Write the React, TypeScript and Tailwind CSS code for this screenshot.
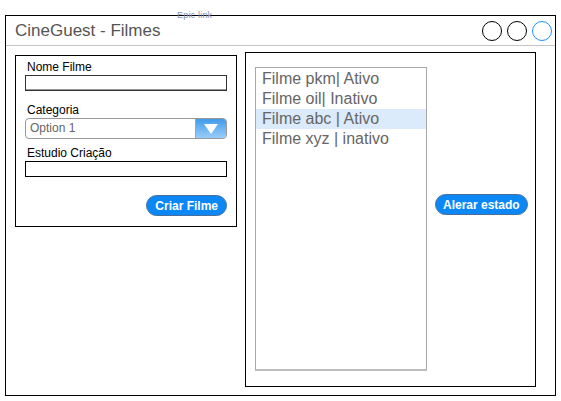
export default function App() {
  const films = [
    { id: "pkm", label: "Filme pkm| Ativo" },
    { id: "oil", label: "Filme oil| Inativo" },
    { id: "abc", label: "Filme abc | Ativo" },
    { id: "xyz", label: "Filme xyz | inativo" },
  ];
  const selected = "abc";

  return (
    <div className="relative w-[561px] h-[401px] bg-white font-['Liberation_Sans',Arial,sans-serif]">
      <span className="absolute z-10 left-[177px] top-[10px] text-[9px] leading-[10px] text-[#8292b4] tracking-[0.2px]">
        Epic link
      </span>
      <div className="ml-[5px] pt-[15px]">
        <div className="w-[551px] h-[381px] border border-black flex flex-col">
          {/* title bar */}
          <div className="h-[30px] shrink-0 flex items-center justify-between border-b border-[#c4c4c4] pl-[9px] pr-[3px]">
            <span className="text-[17px] text-[#555] leading-none">CineGuest - Filmes</span>
            <div className="flex gap-[5px]">
              <span className="w-[20px] h-[20px] rounded-full border border-black" />
              <span className="w-[20px] h-[20px] rounded-full border border-black" />
              <span className="w-[20px] h-[20px] rounded-full border border-[#1e90ff]" />
            </div>
          </div>

          <div className="flex items-start pl-[9px] pt-[6px] gap-[8px]">
            {/* form panel */}
            <div className="mt-[3px] w-[222px] h-[172px] border border-black px-[9px] pt-[4px] flex flex-col">
              <label className="pl-[2px] text-[12px] leading-[14px] text-black">Nome Filme</label>
              <div className="mt-[1px] h-[16px] border border-[#333] shadow-[inset_0_-1px_0_#999]" />
              <label className="mt-[12px] pl-[2px] text-[12px] leading-[14px] text-black">Categoria</label>
              <div className="mt-[1px] h-[21px] flex border border-[#999] rounded-[4px] overflow-hidden">
                <span className="flex-1 pl-[4px] text-[12px] leading-[19px] text-[#666]">Option 1</span>
                <span className="w-[31px] flex items-center justify-center bg-gradient-to-b from-[#3f9be9] to-[#97cdfb] border-l border-[#9ab]">
                  <svg width="14" height="10" viewBox="0 0 14 10">
                    <path d="M0 0 H14 L7 10 Z" fill="#fff" />
                  </svg>
                </span>
              </div>
              <label className="mt-[7px] pl-[2px] text-[12px] leading-[14px] text-black">Estudio Criação</label>
              <div className="mt-[1px] h-[16px] border border-black" />
              <div className="mt-[18px] flex justify-end">
                <button className="h-[21px] px-[8px] rounded-full bg-[#0b88f5] border border-[#4b6f99] text-white text-[12px] font-bold leading-none">
                  Criar Filme
                </button>
              </div>
            </div>

            {/* list panel */}
            <div className="w-[291px] h-[335px] border border-black flex items-start pl-[9px] pt-[14px]">
              <div className="w-[172px] h-[304px] border border-[#a8a8a8] border-b-[#bdbdbd] border-b-2 pt-[1px]">
                {films.map((f) => (
                  <div
                    key={f.id}
                    className={`h-[20px] pl-[6px] text-[16px] leading-[19px] text-[#666] ${
                      f.id === selected ? "bg-[#dbebfb]" : ""
                    }`}
                  >
                    {f.label}
                  </div>
                ))}
              </div>
              <button className="mt-[127px] ml-[8px] h-[21px] px-[7px] rounded-full bg-[#0b88f5] border border-[#4b6f99] text-white text-[12px] font-bold leading-none">
                Alerar estado
              </button>
            </div>
          </div>
        </div>
      </div>
    </div>
  );
}
